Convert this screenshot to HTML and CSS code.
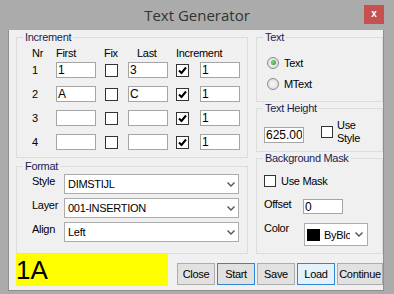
FILE: index.html
```html
<!DOCTYPE html>
<html lang="en">
<head>
    <meta charset="UTF-8">
    <title>Text Generator</title>
    <link rel="stylesheet" href="styles.css">
</head>
<body>
    <div class="titlebar">
        <h1 class="title">Text Generator</h1>
        <button class="close">x</button>
    </div>

    <div class="client">
        <div class="groups">
            <div class="col">
                <!-- Increment -->
                <fieldset class="group inc">
                    <legend>Increment</legend>
                    <div class="inc-body">
                        <div class="inc-grid inc-head">
                            <span>Nr</span>
                            <span>First</span>
                            <span class="pad8">Fix</span>
                            <span class="pad9">Last</span>
                            <span class="pad8">Increment</span>
                            <span></span>
                        </div>
                        <div class="inc-rows">
                            <div class="inc-grid">
                                <span>1</span>
                                <input class="field" value="1">
                                <span class="check pad9"></span>
                                <input class="field" value="3">
                                <span class="check on pad8"><svg viewBox="0 0 11 11"><polyline points="2,5.5 4.5,8 9,2.5"/></svg></span>
                                <input class="field" value="1">
                            </div>
                            <div class="inc-grid">
                                <span>2</span>
                                <input class="field" value="A">
                                <span class="check pad9"></span>
                                <input class="field" value="C">
                                <span class="check on pad8"><svg viewBox="0 0 11 11"><polyline points="2,5.5 4.5,8 9,2.5"/></svg></span>
                                <input class="field" value="1">
                            </div>
                            <div class="inc-grid">
                                <span>3</span>
                                <input class="field" value="">
                                <span class="check pad9"></span>
                                <input class="field" value="">
                                <span class="check on pad8"><svg viewBox="0 0 11 11"><polyline points="2,5.5 4.5,8 9,2.5"/></svg></span>
                                <input class="field" value="1">
                            </div>
                            <div class="inc-grid">
                                <span>4</span>
                                <input class="field" value="">
                                <span class="check pad9"></span>
                                <input class="field" value="">
                                <span class="check on pad8"><svg viewBox="0 0 11 11"><polyline points="2,5.5 4.5,8 9,2.5"/></svg></span>
                                <input class="field" value="1">
                            </div>
                        </div>
                    </div>
                </fieldset>

                <!-- Format -->
                <fieldset class="group fmt">
                    <legend>Format</legend>
                    <div class="fmt-body">
                        <label>Style</label>
                        <div class="combo"><span>DIMSTIJL</span><svg class="chev" viewBox="0 0 8 5"><polyline points="0.5,0.5 4,4 7.5,0.5"/></svg></div>
                        <label>Layer</label>
                        <div class="combo"><span>001-INSERTION</span><svg class="chev" viewBox="0 0 8 5"><polyline points="0.5,0.5 4,4 7.5,0.5"/></svg></div>
                        <label>Align</label>
                        <div class="combo"><span>Left</span><svg class="chev" viewBox="0 0 8 5"><polyline points="0.5,0.5 4,4 7.5,0.5"/></svg></div>
                    </div>
                </fieldset>
            </div>

            <div class="col">
                <!-- Text type -->
                <fieldset class="group txt">
                    <legend>Text</legend>
                    <div class="txt-body">
                        <div class="radio-row"><span class="radio on"></span>Text</div>
                        <div class="radio-row"><span class="radio"></span>MText</div>
                    </div>
                </fieldset>

                <!-- Text height -->
                <fieldset class="group hgt">
                    <legend>Text Height</legend>
                    <div class="hgt-body">
                        <input class="field" value="625.000">
                        <span class="check"></span>
                        <label>Use<br>Style</label>
                    </div>
                </fieldset>

                <!-- Background mask -->
                <fieldset class="group mask">
                    <legend>Background Mask</legend>
                    <div class="mask-body">
                        <div class="mask-use"><span class="check"></span>Use Mask</div>
                        <div class="mask-grid">
                            <label>Offset</label>
                            <input class="field offset" value="0">
                            <label>Color</label>
                            <div class="combo color">
                                <span class="swatch"></span>
                                <span class="color-name">ByBlock</span>
                                <svg class="chev" viewBox="0 0 8 5"><polyline points="0.5,0.5 4,4 7.5,0.5"/></svg>
                            </div>
                        </div>
                    </div>
                </fieldset>
            </div>
        </div>

        <div class="footer">
            <div class="preview">1A</div>
            <div class="buttons">
                <button class="btn">Close</button>
                <button class="btn focus">Start</button>
                <button class="btn">Save</button>
                <button class="btn focus hover">Load</button>
                <button class="btn wide">Continue</button>
            </div>
        </div>
    </div>
</body>
</html>
```

FILE: styles.css
```css
* {
    box-sizing: border-box;
}

body {
    margin: 0;
    width: 394px;
    height: 294px;
    overflow: hidden;
    background: #ababab;
    font-family: "Liberation Sans", Arial, sans-serif;
    font-size: 11px;
    letter-spacing: -0.3px;
    color: #000;
}

/* title bar */
.titlebar {
    height: 30px;
    display: grid;
    grid-template-columns: 1fr auto 1fr;
    align-items: center;
}

.title {
    grid-column: 2;
    margin: 0;
    font-family: "Open Sans", sans-serif;
    font-weight: normal;
    font-size: 15px;
    letter-spacing: 0;
    color: #333;
}

.close {
    grid-column: 3;
    justify-self: end;
    align-self: start;
    margin: 5px 10px 0 0;
    width: 20px;
    height: 19px;
    padding: 0 0 2px;
    border: none;
    background: #c75050;
    color: #fff;
    font: bold 10px "Liberation Sans", sans-serif;
}

/* client area */
.client {
    margin-left: 8px;
    width: 376px;
    background: #f0f0f0;
    border: 1px solid #8f8f8f;
    border-top: none;
    padding: 1px 0 4px 7px;
}

.groups {
    display: grid;
    grid-template-columns: 232px 127px;
    column-gap: 8px;
    height: 223px;
}

.col {
    display: flex;
    flex-direction: column;
}

.group {
    margin: 0;
    padding: 0;
    min-width: 0;
    border: 1px solid #dcdcdc;
}

.group legend {
    margin-left: 6px;
    padding: 0 2px;
    line-height: 13px;
    color: #1c1c50;
}

.field {
    width: 40px;
    height: 16px;
    margin: 0;
    padding: 0 1px;
    border: 1px solid #a5a5a5;
    background: #fff;
    font: 12px "Liberation Sans", Arial, sans-serif;
    color: #000;
    outline: none;
}

.check {
    width: 13px;
    height: 13px;
    border: 1px solid #333;
    background: #fff;
    display: flex;
}

.check svg {
    width: 11px;
    height: 11px;
    fill: none;
    stroke: #000;
    stroke-width: 2;
}

.combo {
    height: 20px;
    border: 1px solid #acacac;
    background: #fff;
    display: flex;
    align-items: center;
    justify-content: space-between;
    padding: 0 3px 0 3px;
    white-space: nowrap;
    overflow: hidden;
}

.chev {
    width: 8px;
    height: 5px;
    flex: none;
    fill: none;
    stroke: #555;
    stroke-width: 1.4;
}

/* increment */
.inc {
    height: 127px;
}

.inc-body {
    padding: 3px 0 0 15px;
}

.inc-grid {
    display: grid;
    grid-template-columns: 24px 40px 32px 40px 32px 40px;
    align-items: center;
}

.inc-head {
    height: 13px;
    line-height: 13px;
    margin-bottom: 2px;
    white-space: nowrap;
}

.inc-rows {
    display: grid;
    row-gap: 8px;
}

.pad8 {
    margin-left: 8px;
}

.pad9 {
    margin-left: 9px;
}

/* format */
.fmt {
    height: 94px;
    margin-top: 2px;
}

.fmt-body {
    padding: 1px 0 0 15px;
    display: grid;
    grid-template-columns: 32px 175px;
    row-gap: 4px;
    align-items: start;
}

.fmt-body label {
    line-height: 13px;
    padding-top: 1px;
}

/* text type */
.txt {
    height: 71px;
}

.txt-body {
    padding: 12px 0 0 10px;
    display: flex;
    flex-direction: column;
    gap: 8px;
}

.radio-row {
    display: flex;
    align-items: center;
    gap: 5px;
    height: 13px;
}

.radio {
    width: 12px;
    height: 12px;
    border-radius: 50%;
    border: 1px solid #8a8a8a;
    background: radial-gradient(circle at 50% 50%, #f8f8f8, #d8d8d8);
    display: flex;
    align-items: center;
    justify-content: center;
}

.radio.on::after {
    content: "";
    width: 5px;
    height: 5px;
    border-radius: 50%;
    background: radial-gradient(circle at 40% 40%, #7fe07f, #1f8a2a);
}

/* text height */
.hgt {
    height: 50px;
}

.hgt-body {
    display: flex;
    align-items: flex-start;
    padding: 4px 0 0 7px;
}

.hgt-body .field {
    margin-top: 8px;
    overflow: hidden;
}

.hgt-body .check {
    margin: 7px 0 0 17px;
    width: 12px;
    height: 12px;
}

.hgt-body label {
    margin-left: 4px;
    line-height: 12.5px;
}

/* background mask */
.mask {
    height: 102px;
}

.mask-body {
    padding: 10px 0 0 7px;
}

.mask-use {
    display: flex;
    align-items: center;
    gap: 5px;
    height: 12px;
}

.mask-use .check {
    width: 12px;
    height: 12px;
}

.mask-grid {
    display: grid;
    grid-template-columns: 39px auto;
    row-gap: 9px;
    margin-top: 12px;
    align-items: start;
}

.mask-grid label {
    margin-top: -1px;
    line-height: 13px;
}

.offset {
    height: 15px;
}

.combo.color {
    width: 64px;
    height: 23px;
    margin-left: 1px;
    padding: 0 4px 0 2px;
    justify-content: flex-start;
}

.swatch {
    width: 13px;
    height: 12px;
    background: #000;
    flex: none;
}

.color-name {
    margin-left: 4px;
    width: 26px;
    overflow: hidden;
    flex: none;
}

.combo.color .chev {
    margin-left: auto;
}

/* footer */
.footer {
    display: flex;
    height: 32px;
}

.preview {
    width: 152px;
    background: #ffff00;
    font-size: 26px;
    line-height: 32px;
    letter-spacing: 0;
}

.buttons {
    display: flex;
    gap: 2px;
    margin: 0 0 1px 9px;
    align-self: flex-end;
}

.btn {
    width: 38px;
    height: 22px;
    padding: 0;
    border: 1px solid #adadad;
    background: #e1e1e1;
    font: 11px "Liberation Sans", Arial, sans-serif;
    letter-spacing: -0.3px;
    color: #000;
}

.btn.focus {
    border-color: #2f86d8;
}

.btn.hover {
    background: #e5f1fb;
}

.btn.wide {
    width: 46px;
}
```
